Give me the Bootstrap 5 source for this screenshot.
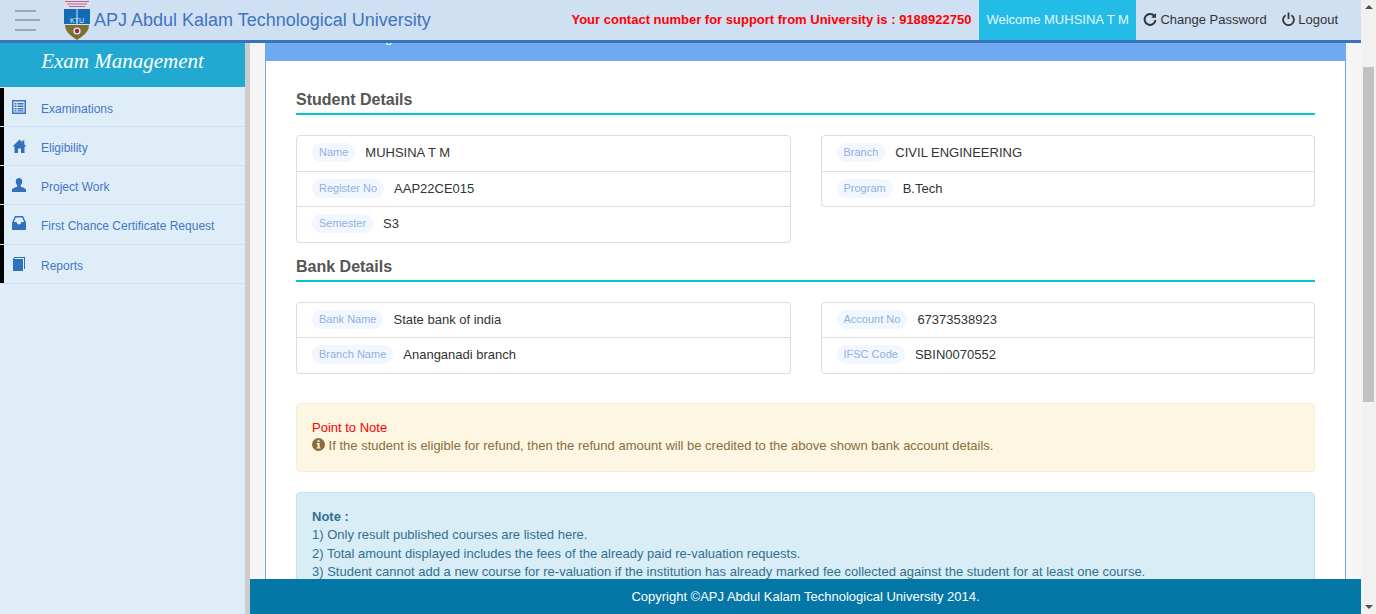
<!DOCTYPE html>
<html lang="en">
<head>
    <meta charset="UTF-8">
    <meta name="viewport" content="width=device-width, initial-scale=1.0">
    <title>Exam Management</title>
    <link rel="stylesheet" href="https://cdn.jsdelivr.net/npm/bootstrap@5.3.0/dist/css/bootstrap.min.css">
    <style>
        html, body { height: 100%; overflow: hidden; }
        body { font-family: "Liberation Sans", Arial, sans-serif; font-size: 13px; color: #333; background: #f5f5f5; }
        .app-shell { height: 100vh; }
        .app-main { width: 1361px; }

        /* header */
        .top-bar { height: 43px; background: #cfe0f3; border-bottom: 3px solid #3873bd; flex: none; }
        .burger { width: 25px; margin-left: 15px; margin-right: 24px; gap: 7.5px; }
        .burger span { display: block; height: 2px; background: #9aabb8; }
        .burger span:first-child, .burger span:last-child { margin-right: 4px; }
        .brand-logo { width: 26px; height: 40px; flex: none; }
        .brand-name { font-size: 18px; color: #3f74bd; margin-left: 4px; }
        .support-line { font-weight: 700; color: #f00; margin-right: 8px; }
        .welcome-box { background: #22bce6; color: #e4f7ff; padding: 0 7px; height: 40px; line-height: 40px; }
        .head-link { color: #333; text-decoration: none; margin-left: 7px; }
        .head-link + .head-link { margin-left: 15px; }
        .head-link svg { vertical-align: -2px; }
        .head-links { margin-right: 23px; }

        /* sidebar */
        .side-bar { width: 250px; flex: none; background: #dfedf9; border-right: 5px solid #ccc; }
        .side-title { height: 44px; background: #22a9d2; color: #fff; text-align: center; font-family: "Liberation Serif", serif; font-style: italic; font-size: 21px; line-height: 36px; }
        .side-menu { margin-top: 1px; }
        .side-item { height: 39px; border-bottom: 1px solid #cfe0f3; color: #4378c4; font-size: 12px; text-decoration: none; padding-left: 12px; padding-top: 4px; position: relative; }
        .side-item::before { content: ""; position: absolute; left: 0; top: 0; bottom: 0; width: 4px; background: #000; }
        .side-item.tall { height: 40px; padding-top: 2px; }
        .side-item svg { width: 14px; height: 14px; margin-right: 15px; margin-top: -5px; flex: none; }
        .side-item svg.wide-icon { width: 15px; margin-right: 14px; }

        /* content, panel is pulled up the way the scrolled page sits */
        .content-area { background: #f5f5f5; padding: 0 15px; min-height: 0; }
        .main-panel { background: #fff; border: 1px solid #6fa9f0; border-top: 0; height: 700px; margin-top: -30px; }
        .panel-head { height: 48px; line-height: 48px; background: #6fa9f0; margin: 0 -1px; color: #fff; font-size: 14px; padding-left: 21px; }
        .panel-inner { padding: 28px 30px 0; }
        .sect-title { font-size: 16px; font-weight: 700; color: #555; border-bottom: 2px solid #00c8d0; margin: 0 0 20px; line-height: 22px; height: 24px; box-sizing: content-box; }
        .detail-row { --bs-gutter-x: 30px; }
        .detail-list { --bs-list-group-border-color: #ddd; --bs-list-group-border-radius: 4px; --bs-list-group-color: #333; font-size: 13px; }
        .detail-list .list-group-item { padding: 7px 15px; height: 35.57px; line-height: 20px; }
        .detail-list .list-group-item:first-child { height: 36.57px; }
        .tag-pill { display: inline-block; background: #f2f7ff; color: #8fb0e0; font-size: 11px; line-height: 15px; padding: 2px 7px; border-radius: 9px; margin-right: 10px; vertical-align: 1px; }
        .bank-title { margin: 13.4px 0 19.5px; }
        .note-warn, .note-info { font-size: 13px; line-height: 18.57px; padding: 14.6px 15px; border-radius: 4px; }
        .note-warn { --bs-alert-bg: #fdf6e3; --bs-alert-border-color: #faebcc; --bs-alert-color: #8a6d3b; margin: 29.3px 0 20px; height: 69px; }
        .note-warn svg { vertical-align: -1px; }
        .point-red { color: #f00; }
        .note-info { --bs-alert-bg: #d9edf7; --bs-alert-border-color: #bce8f1; --bs-alert-color: #31708f; }

        /* footer sits over the scrolled content */
        .foot-bar { position: absolute; left: 250px; right: 15px; bottom: 0; height: 35px; background: #0477a6; color: #fff; text-align: center; line-height: 35px; }

        /* page scrollbar */
        .fake-scroll { width: 15px; background: #f1f1f1; flex: none; }
        .scroll-thumb { height: 335px; margin: 67px 2px 0; background: #c1c1c1; }
        .arrow-up, .arrow-down { position: absolute; left: 4px; width: 0; height: 0; border-left: 4px solid transparent; border-right: 4px solid transparent; }
        .arrow-up { top: 5px; border-bottom: 4px solid #505050; }
        .arrow-down { bottom: 5px; border-top: 4px solid #505050; }
        .logo-text { font-family: "Liberation Sans", sans-serif; font-size: 7px; fill: #e8f2fa; }
    </style>
</head>
<body>
    <div class="app-shell d-flex position-relative">
        <div class="app-main d-flex flex-column">
            <div class="top-bar d-flex align-items-center">
                <div class="burger d-flex flex-column">
                    <span></span><span></span><span></span>
                </div>
                <svg class="brand-logo" viewBox="0 0 26 40">
                    <rect x="0" y="0" width="26" height="9" fill="#e6dbe8"/>
                    <path d="M1 1.500h24M3 4h20M5 6.500h16" stroke="#a76a9a" stroke-width="1"/>
                    <rect x="0" y="9" width="26" height="15" fill="#0f6cb5"/>
                    <path d="M13 9v15" stroke="#cfe0f3" stroke-width="1"/>
                    <text class="logo-text" x="13" y="22.500" text-anchor="middle">KTU</text>
                    <path d="M1 25h24c0 7-6 11-12 15C7 36 1 32 1 25z" fill="#7b7232"/>
                    <circle cx="13" cy="31" r="3.600" fill="#f3e6e6"/>
                    <circle cx="13" cy="31" r="2.200" fill="#a0234a"/>
                </svg>
                <span class="brand-name">APJ Abdul Kalam Technological University</span>
                <span class="support-line ms-auto">Your contact number for support from University is : 9188922750</span>
                <span class="welcome-box">Welcome MUHSINA T M</span>
                <div class="head-links d-flex">
                    <a class="head-link" href="#">
                        <svg width="14" height="14" viewBox="0 0 14 14" fill="none" stroke="#333" stroke-width="2"><path d="M11.600 4.600A5.400 5.400 0 1 0 12.400 8"/><path d="M13 1v4.800H8.200z" fill="#333" stroke="none"/></svg>
                        Change Password
                    </a>
                    <a class="head-link" href="#">
                        <svg width="13" height="14" viewBox="0 0 13 14" fill="none" stroke="#333" stroke-width="1.800"><path d="M3.600 3.200a5.400 5.400 0 1 0 5.800 0"/><path d="M6.500 .5v6.500"/></svg>
                        Logout
                    </a>
                </div>
            </div>
            <div class="d-flex flex-grow-1" style="min-height:0">
                <div class="side-bar">
                    <div class="side-title">Exam Management</div>
                    <div class="side-menu d-flex flex-column">
                        <a class="side-item d-flex align-items-center" href="#">
                            <svg viewBox="0 0 14 14"><path fill="#3f74bd" d="M0 0h14v14H0z"/><path fill="#dfedf9" d="M1.500 1.500h11v11h-11z"/><path fill="#3f74bd" d="M2.500 3h2v1.500h-2zM5.500 3h6v1.500h-6zM2.500 5.500h2V7h-2zM5.500 5.500h6V7h-6zM2.500 8h2v1.500h-2zM5.500 8h6v1.500h-6zM2.500 10.200h2v1.300h-2zM5.500 10.200h6v1.300h-6z"/></svg>
                            Examinations
                        </a>
                        <a class="side-item d-flex align-items-center" href="#">
                            <svg class="wide-icon" viewBox="0 0 14 14"><path fill="#3071bd" d="M7 .5L0 7.500h2V14h3.500V9.500h3V14H12V7.500h2l-2.200-2.200V1.500h-2v1.800z"/></svg>
                            Eligibility
                        </a>
                        <a class="side-item d-flex align-items-center" href="#">
                            <svg viewBox="0 0 14 14"><path fill="#3071bd" d="M7 0c2 0 3.200 1.400 3.200 3.400 0 1.600-.7 3-1.500 3.800v1.200c0 .5 4.800 1.300 5.300 3.100V14H0v-2.500c.5-1.800 5.300-2.600 5.300-3.100V7.200C4.500 6.400 3.800 5 3.800 3.400 3.800 1.400 5 0 7 0z"/></svg>
                            Project Work
                        </a>
                        <a class="side-item tall d-flex align-items-center" href="#">
                            <svg viewBox="0 0 14 14"><path fill="#3071bd" d="M3 0h8l3 6.500V13c0 .6-.4 1-1 1H1c-.6 0-1-.4-1-1V6.500zM3.800 1.500L1.900 6H4.600l1 2.200h2.800l1-2.200h2.700l-1.900-4.500z"/></svg>
                            First Chance Certificate Request
                        </a>
                        <a class="side-item d-flex align-items-center" href="#">
                            <svg viewBox="0 0 14 14"><path fill="#3071bd" d="M1 2l1.600-2H13v12h-1V1H3L2.400 2H11v12H1z"/></svg>
                            Reports
                        </a>
                    </div>
                </div>
                <div class="content-area flex-grow-1 overflow-hidden">
                    <div class="main-panel">
                        <div class="panel-head">Examination Registration</div>
                        <div class="panel-inner">
                            <h5 class="sect-title">Student Details</h5>
                            <div class="row detail-row">
                                <div class="col-6">
                                    <ul class="list-group detail-list">
                                        <li class="list-group-item"><span class="tag-pill">Name</span>MUHSINA T M</li>
                                        <li class="list-group-item"><span class="tag-pill">Register No</span>AAP22CE015</li>
                                        <li class="list-group-item"><span class="tag-pill">Semester</span>S3</li>
                                    </ul>
                                </div>
                                <div class="col-6">
                                    <ul class="list-group detail-list">
                                        <li class="list-group-item"><span class="tag-pill">Branch</span>CIVIL ENGINEERING</li>
                                        <li class="list-group-item"><span class="tag-pill">Program</span>B.Tech</li>
                                    </ul>
                                </div>
                            </div>
                            <h5 class="sect-title bank-title">Bank Details</h5>
                            <div class="row detail-row">
                                <div class="col-6">
                                    <ul class="list-group detail-list">
                                        <li class="list-group-item"><span class="tag-pill">Bank Name</span>State bank of india</li>
                                        <li class="list-group-item"><span class="tag-pill">Branch Name</span>Ananganadi branch</li>
                                    </ul>
                                </div>
                                <div class="col-6">
                                    <ul class="list-group detail-list">
                                        <li class="list-group-item"><span class="tag-pill">Account No</span>67373538923</li>
                                        <li class="list-group-item"><span class="tag-pill">IFSC Code</span>SBIN0070552</li>
                                    </ul>
                                </div>
                            </div>
                            <div class="alert note-warn">
                                <span class="point-red">Point to Note</span><br>
                                <svg width="13" height="13" viewBox="0 0 13 13"><circle cx="6.500" cy="6.500" r="6.500" fill="#8a6d3b"/><path fill="#fdf6e3" d="M5.500 2.200h2v1.800h-2zM4.800 5h2.800v4.400h.8v1.200H4.800V9.400h.8V6.200h-.8z"/></svg>
                                If the student is eligible for refund, then the refund amount will be credited to the above shown bank account details.
                            </div>
                            <div class="alert note-info">
                                <b>Note :</b><br>
                                1) Only result published courses are listed here.<br>
                                2) Total amount displayed includes the fees of the already paid re-valuation requests.<br>
                                3) Student cannot add a new course for re-valuation if the institution has already marked fee collected against the student for at least one course.
                            </div>
                        </div>
                    </div>
                </div>
            </div>
        </div>
        <div class="fake-scroll position-relative">
            <div class="arrow-up"></div>
            <div class="scroll-thumb"></div>
            <div class="arrow-down"></div>
        </div>
        <div class="foot-bar">Copyright ©APJ Abdul Kalam Technological University 2014.</div>
    </div>
    <script src="https://cdn.jsdelivr.net/npm/bootstrap@5.3.0/dist/js/bootstrap.bundle.min.js"></script>
</body>
</html>
